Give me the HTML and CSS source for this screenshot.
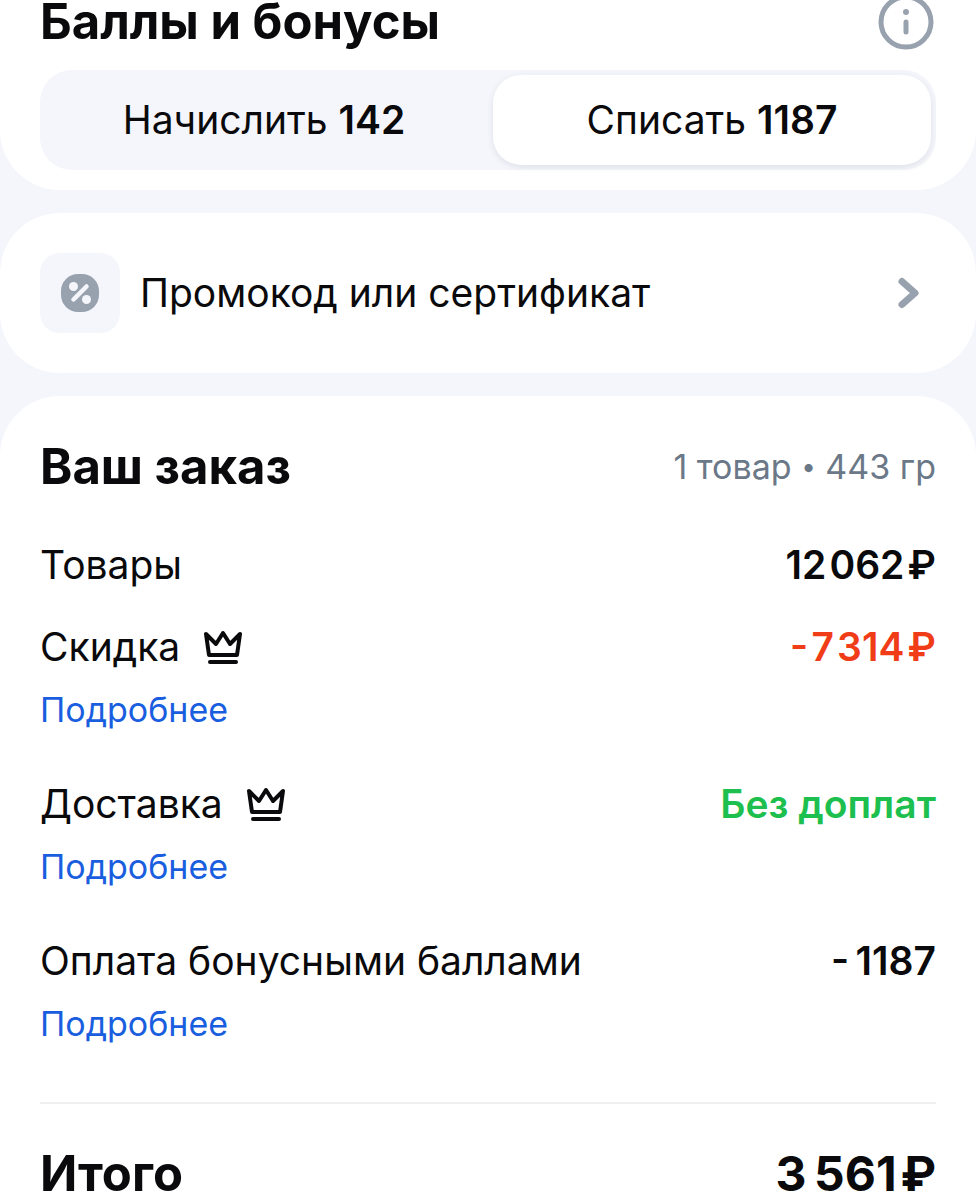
FILE: index.html
```
<!DOCTYPE html>
<html lang="ru">
<head>
    <meta charset="UTF-8">
    <meta name="viewport" content="width=device-width, initial-scale=1.0">
    <title>Оформление заказа</title>
    <link rel="stylesheet" href="styles.css">
</head>
<body>
    <section class="card bonuses">
        <div class="bonuses-header">
            <h2>Баллы и бонусы</h2>
            <button type="button" class="info" aria-label="Подробнее о бонусах">
                <svg width="56" height="56" viewBox="0 0 56 56" fill="none" stroke="#98a2ae">
                    <circle cx="28" cy="28" r="25" stroke-width="5"/>
                    <circle cx="28" cy="18" r="3" fill="#98a2ae" stroke="none"/>
                    <path d="M28 28v10" stroke-width="5" stroke-linecap="round"/>
                </svg>
            </button>
        </div>
        <div class="switch">
            <button type="button" class="switch-item">Начислить <b>142</b></button>
            <button type="button" class="switch-item active">Списать <b>1187</b></button>
        </div>
    </section>

    <button type="button" class="card promo">
        <span class="promo-icon">
            <svg width="38" height="38" viewBox="0 0 38 38">
                <rect width="38" height="38" rx="17" fill="#98a2ae"/>
                <circle cx="12.500" cy="12.500" r="4.500" fill="#f5f6fb"/>
                <circle cx="25.500" cy="25.500" r="4.500" fill="#f5f6fb"/>
                <path d="M25.500 12.500L12.500 25.500" stroke="#f5f6fb" stroke-width="4.500" stroke-linecap="round"/>
            </svg>
        </span>
        <span class="promo-text">Промокод или сертификат</span>
        <svg class="chevron" width="22" height="32" viewBox="0 0 22 32" fill="none" stroke="#98a2ae" stroke-width="7" stroke-linecap="round" stroke-linejoin="round">
            <path d="M4 4.500L17 16L4 27.500"/>
        </svg>
    </button>

    <section class="card order">
        <div class="row order-header">
            <h2>Ваш заказ</h2>
            <span class="order-info">1 товар <span class="dot">•</span> 443 гр</span>
        </div>

        <div class="order-list">
            <div class="row">
                <span>Товары</span>
                <span class="price">12&#8202;062&#8202;₽</span>
            </div>
            <div class="item">
                <div class="row">
                    <span class="label">Скидка
                        <svg width="38" height="34" viewBox="0 0 38 34" fill="none" stroke="#0a0a0c" stroke-width="4" stroke-linecap="round" stroke-linejoin="round">
                            <path d="M2 4L5 25H33L36 4L26 14L19 3L12 14Z"/>
                            <path d="M6 32H32"/>
                        </svg>
                    </span>
                    <span class="price red">-&#8202;7&#8202;314&#8202;₽</span>
                </div>
                <a href="#" class="more">Подробнее</a>
            </div>
            <div class="item">
                <div class="row">
                    <span class="label">Доставка
                        <svg width="38" height="34" viewBox="0 0 38 34" fill="none" stroke="#0a0a0c" stroke-width="4" stroke-linecap="round" stroke-linejoin="round">
                            <path d="M2 4L5 25H33L36 4L26 14L19 3L12 14Z"/>
                            <path d="M6 32H32"/>
                        </svg>
                    </span>
                    <span class="price green">Без доплат</span>
                </div>
                <a href="#" class="more">Подробнее</a>
            </div>
            <div class="item">
                <div class="row">
                    <span>Оплата бонусными баллами</span>
                    <span class="price">-&#8201;1187</span>
                </div>
                <a href="#" class="more">Подробнее</a>
            </div>
        </div>

        <div class="row total">
            <h2>Итого</h2>
            <span class="total-price">3&#8201;561&#8202;₽</span>
        </div>
    </section>
</body>
</html>
```
FILE: styles.css
```
* {
    box-sizing: border-box;
}
body {
    margin: 0;
    min-height: 100vh;
    display: flex;
    flex-direction: column;
    gap: 23px;
    background-color: #f5f6fb;
    color: #0a0a0c;
    font-family: Inter, "Liberation Sans", sans-serif;
    font-size: 39px;
    line-height: 50px;
}
h2 {
    margin: 0;
    font-size: 49px;
    font-weight: 700;
}
button {
    border: none;
    padding: 0;
    background: none;
    color: inherit;
    font: inherit;
    cursor: pointer;
}
svg {
    display: block;
    flex-shrink: 0;
}
.card {
    background-color: white;
    border-radius: 60px;
    padding: 40px;
}
.bonuses {
    border-radius: 0 0 60px 60px;
    padding: 0 40px 20px;
}
.bonuses-header {
    display: flex;
    align-items: center;
    justify-content: space-between;
    height: 44px;
    margin-bottom: 26px;
    line-height: 44px;
}
.info {
    margin-right: 2px;
}
.switch {
    display: flex;
    gap: 10px;
    height: 100px;
    padding: 5px;
    border-radius: 32px;
    background-color: #f5f6fb;
}
.switch-item {
    flex: 1;
    border-radius: 28px;
}
.switch-item b {
    font-weight: 600;
}
.switch-item.active {
    background-color: white;
    box-shadow: 0 2px 6px rgba(40, 70, 90, 0.12);
}
.promo {
    display: flex;
    align-items: center;
    gap: 20px;
    text-align: left;
}
.promo-icon {
    display: flex;
    align-items: center;
    justify-content: center;
    width: 80px;
    height: 80px;
    border-radius: 20px;
    background-color: #f5f6fb;
}
.promo-text {
    flex: 1;
}
.chevron {
    margin-right: 16px;
}
.order {
    flex-grow: 1;
    border-radius: 60px 60px 0 0;
    padding: 46px 40px 0;
}
.row {
    display: flex;
    align-items: center;
    justify-content: space-between;
}
.order-header {
    margin-bottom: 48px;
}
.order-info {
    color: #6b7888;
    font-size: 34px;
}
.dot {
    font-size: 26px;
    vertical-align: 3px;
    line-height: 1;
}
.order-list {
    display: flex;
    flex-direction: column;
    gap: 32px;
}
.item {
    padding-bottom: 16px;
}
.label {
    display: flex;
    align-items: center;
    gap: 24px;
}
.price {
    font-weight: 600;
}
.red {
    color: #f03c17;
}
.green {
    color: #1dbf4f;
}
.more {
    display: block;
    width: fit-content;
    margin-top: 17px;
    color: #1a5ee0;
    font-size: 34px;
    line-height: 42px;
    text-decoration: none;
}
.total {
    margin-top: 41px;
    padding-top: 45px;
    border-top: 2px solid #eeeff1;
}
.total-price {
    font-size: 48px;
    font-weight: 700;
}
```
